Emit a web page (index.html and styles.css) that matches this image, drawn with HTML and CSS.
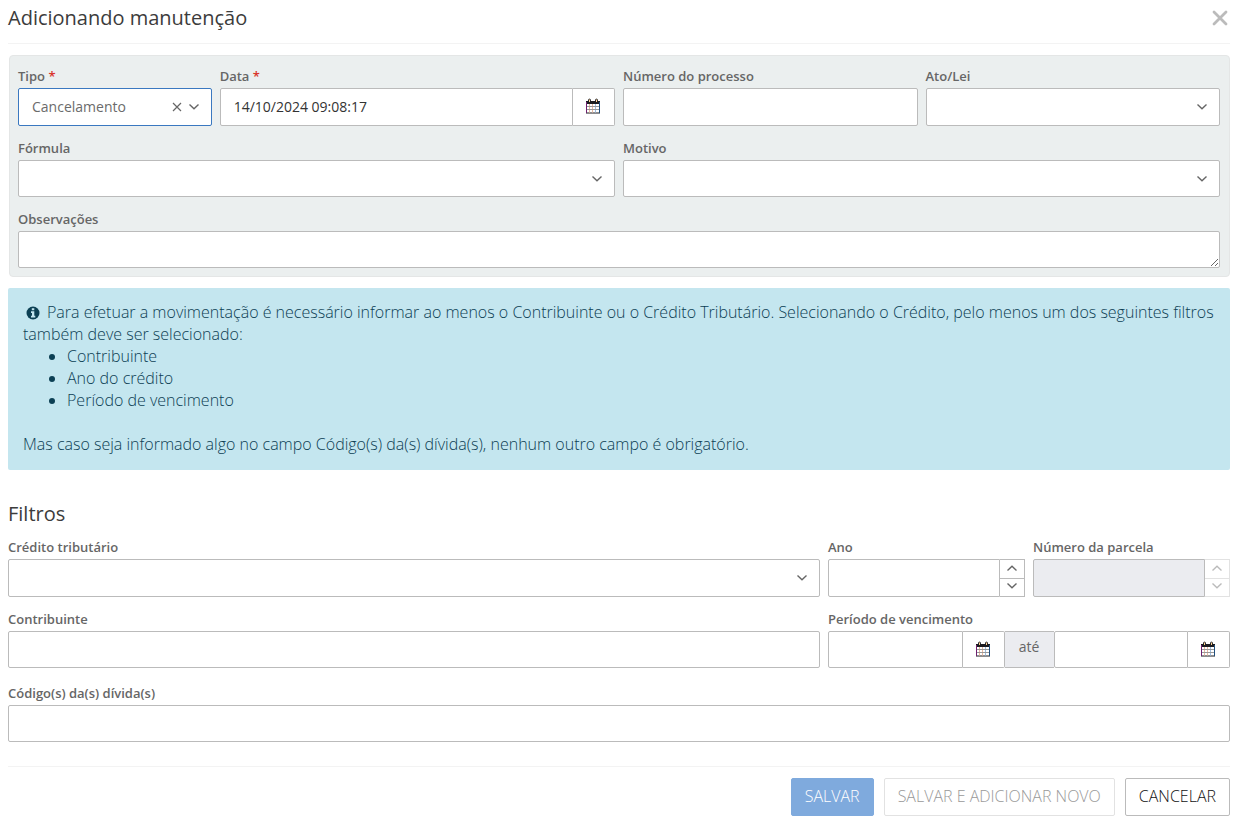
FILE: index.html
```html
<!DOCTYPE html>
<html lang="pt-BR">
<head>
<meta charset="utf-8">
<meta name="viewport" content="width=device-width, initial-scale=1">
<title>Adicionando manutenção</title>
<link rel="stylesheet" href="styles.css">
</head>
<body>
<svg class="sprite" aria-hidden="true">
  <symbol id="chevron" viewBox="0 0 12 8"><path d="M1.500 1.500 6 5.700l4.500-4.200" fill="none" stroke="currentColor" stroke-width="1.400"/></symbol>
  <symbol id="calendar" viewBox="0 0 16 16">
    <path d="M1 3h2q0-2.500 1.500-2.500T6 3h4q0-2.500 1.500-2.500T13 3h2v12.500H1z" fill="#1c1c20"/>
    <path d="M2 6h12v8.500H2z" fill="#fff"/>
    <path d="M4.500 6v8.500M7.500 6v8.500" stroke="#e8b8a0"/><path d="M10.500 6v8.500" stroke="#9cbce0"/>
    <path d="M2 8.500h12M2 11.500h12" stroke="#999"/>
    <path d="M1.500 4v11" stroke="#702070"/><path d="M14.500 4v11" stroke="#205080"/>
    <path d="M4.500 1.500v2.500M11.500 1.500v2.500" stroke="#ffd090"/>
  </symbol>
</svg>
<form class="dialog">
  <header class="header">
    <h1 class="title">Adicionando manutenção</h1>
    <button class="close" type="button" aria-label="Fechar"><svg viewBox="0 0 16 16"><path d="m2 2 12 12M14 2 2 14" fill="none" stroke="currentColor" stroke-width="2.800" stroke-linecap="round"/></svg></button>
  </header>

  <section class="panel grid">
    <div class="field span-2">
      <label class="label" for="tipo">Tipo <span class="required">*</span></label>
      <div class="select-wrap">
        <select class="control select tall active" id="tipo"><option>Cancelamento</option></select>
        <button class="clear" type="button" aria-label="Limpar"><svg viewBox="0 0 10 10"><path d="m1 1 8 8M9 1 1 9" fill="none" stroke="currentColor" stroke-width="1.200"/></svg></button>
        <svg class="chevron"><use href="#chevron"/></svg>
      </div>
    </div>
    <div class="field span-4">
      <label class="label" for="data">Data <span class="required">*</span></label>
      <div class="group">
        <input class="control tall" id="data" type="text" value="14/10/2024 09:08:17">
        <button class="date-button" type="button" aria-label="Abrir calendário"><svg class="calendar"><use href="#calendar"/></svg></button>
      </div>
    </div>
    <div class="field span-3">
      <label class="label" for="processo">Número do processo</label>
      <input class="control tall" id="processo" type="text">
    </div>
    <div class="field span-3">
      <label class="label" for="ato">Ato/Lei</label>
      <div class="select-wrap"><select class="control select tall" id="ato"><option></option></select><svg class="chevron"><use href="#chevron"/></svg></div>
    </div>
    <div class="field span-6">
      <label class="label" for="formula">Fórmula</label>
      <div class="select-wrap"><select class="control select" id="formula"><option></option></select><svg class="chevron"><use href="#chevron"/></svg></div>
    </div>
    <div class="field span-6">
      <label class="label" for="motivo">Motivo</label>
      <div class="select-wrap"><select class="control select" id="motivo"><option></option></select><svg class="chevron"><use href="#chevron"/></svg></div>
    </div>
    <div class="field span-12">
      <label class="label" for="obs">Observações</label>
      <textarea class="control" id="obs" rows="1"></textarea>
    </div>
  </section>

  <section class="notice">
    <p class="notice-text"><svg class="info" viewBox="0 0 14 14" aria-hidden="true"><circle cx="7" cy="7" r="6.500" fill="currentColor"/><path d="M5.800 2.200h2.500v2H5.800zM5 5.300h3.300v4.500h1v1.600H5V9.800h1V6.900H5z" fill="#c4e6ef"/></svg>Para efetuar a movimentação é necessário informar ao menos o Contribuinte ou o Crédito Tributário. Selecionando o Crédito, pelo menos um dos seguintes filtros também deve ser selecionado:</p>
    <ul class="notice-list"><li>Contribuinte</li><li>Ano do crédito</li><li>Período de vencimento</li></ul>
    <p class="notice-text">Mas caso seja informado algo no campo Código(s) da(s) dívida(s), nenhum outro campo é obrigatório.</p>
  </section>

  <h2 class="title subtitle">Filtros</h2>
  <section class="grid">
    <div class="field span-8">
      <label class="label" for="credito">Crédito tributário</label>
      <div class="select-wrap"><select class="control select tall" id="credito"><option></option></select><svg class="chevron"><use href="#chevron"/></svg></div>
    </div>
    <div class="field span-2">
      <label class="label" for="ano">Ano</label>
      <div class="group">
        <input class="control tall" id="ano" type="text">
        <div class="stepper">
          <button class="step" type="button" aria-label="Aumentar ano"><svg class="mini up"><use href="#chevron"/></svg></button>
          <button class="step" type="button" aria-label="Diminuir ano"><svg class="mini"><use href="#chevron"/></svg></button>
        </div>
      </div>
    </div>
    <div class="field span-2">
      <label class="label" for="parcela">Número da parcela</label>
      <div class="group">
        <input class="control tall" id="parcela" type="text" disabled>
        <div class="stepper">
          <button class="step" type="button" aria-label="Aumentar parcela" disabled><svg class="mini up"><use href="#chevron"/></svg></button>
          <button class="step" type="button" aria-label="Diminuir parcela" disabled><svg class="mini"><use href="#chevron"/></svg></button>
        </div>
      </div>
    </div>
    <div class="field span-8">
      <label class="label" for="contribuinte">Contribuinte</label>
      <input class="control" id="contribuinte" type="text">
    </div>
    <div class="field span-4">
      <label class="label" for="inicio">Período de vencimento</label>
      <div class="group">
        <input class="control" id="inicio" type="text">
        <button class="date-button" type="button" aria-label="Data inicial"><svg class="calendar"><use href="#calendar"/></svg></button>
        <label class="addon" for="fim">até</label>
        <input class="control" id="fim" type="text">
        <button class="date-button" type="button" aria-label="Data final"><svg class="calendar"><use href="#calendar"/></svg></button>
      </div>
    </div>
  </section>
  <div class="field codes">
    <label class="label" for="codigos">Código(s) da(s) dívida(s)</label>
    <input class="control" id="codigos" type="text">
  </div>

  <footer class="footer">
    <button class="button primary" type="submit" disabled>SALVAR</button>
    <button class="button" type="button" disabled>SALVAR E ADICIONAR NOVO</button>
    <button class="button" type="button">CANCELAR</button>
  </footer>
</form>
</body>
</html>
```
FILE: styles.css
```css
* { box-sizing: border-box; }
body {
  margin: 0;
  background: #fff;
  color: #333;
  font: 14px/22px "Open Sans", "Noto Sans", sans-serif;
}
button, input, select, textarea { font: inherit; color: inherit; }
button { padding: 0; cursor: pointer; }
svg { display: block; }
.sprite { display: none; }
.dialog { padding: 0 9px 7px 8px; }

.header {
  display: flex;
  align-items: center;
  justify-content: space-between;
  height: 44px;
  padding-bottom: 8px;
  border-bottom: 1px solid #f3f3f3;
}
.title { margin: 0; color: #3c3c3c; font-size: 20px; line-height: 26px; font-weight: 400; }
.close { width: 20px; border: 0; background: none; color: #bbb; }
.close svg { width: 16px; height: 16px; margin: 0 auto; }

.grid {
  display: grid;
  grid-template-columns: repeat(12, minmax(0, 1fr));
  gap: 12px 8px;
}
.span-2 { grid-column: span 2; }
.span-3 { grid-column: span 3; }
.span-4 { grid-column: span 4; }
.span-6 { grid-column: span 6; }
.span-8 { grid-column: span 8; }
.span-12 { grid-column: span 12; }
.panel {
  margin: 11px 0 0 1px;
  padding: 10px 9px 8px 8px;
  border: 1px solid #e4e6e6;
  border-radius: 4px;
  background: #ebefef;
}

.label {
  display: block;
  height: 22px;
  color: #666;
  font-size: 13px;
  line-height: 20px;
  font-weight: 600;
}
.required { color: #d9342b; }
.control {
  display: block;
  width: 100%;
  min-width: 0;
  height: 37px;
  margin: 0;
  padding: 0 13px 1px;
  border: 1px solid #bbb;
  border-radius: 2px;
  outline: 0;
  background: #fff;
}
.tall { height: 38px; }
.select { appearance: none; color: #6b6b6b; }
.active { border-color: #3a78c0; }
.control:disabled { background: #ebecf0; }
textarea.control { padding: 6px 13px; resize: vertical; }

.select-wrap { position: relative; }
.chevron {
  position: absolute;
  top: 15px;
  right: 12px;
  width: 12px;
  height: 8px;
  color: #666;
  pointer-events: none;
}
.clear {
  position: absolute;
  top: 14px;
  right: 30px;
  border: 0;
  background: none;
  color: #666;
}
.clear svg { width: 10px; height: 10px; }

.group { display: flex; }
.group .control { flex: 1; border-radius: 2px 0 0 2px; }
.date-button {
  display: grid;
  place-items: center;
  flex: 0 0 42px;
  padding: 0 1px 2px 0;
  border: 1px solid #bbb;
  border-left: 0;
  border-radius: 0 2px 2px 0;
  background: #fff;
}
.calendar { width: 16px; height: 16px; }
.addon {
  flex: 0 0 49px;
  padding-top: 4px;
  border: solid #bbb;
  border-width: 1px 0;
  background: #ebecf0;
  color: #666;
  text-align: center;
}
.stepper { display: flex; flex-direction: column; width: 25px; }
.step {
  display: grid;
  place-items: center;
  flex: 1;
  padding-bottom: 2px;
  border: 1px solid #bbb;
  border-left: 0;
  background: #fff;
  color: #666;
}
.step + .step { border-top: 0; }
.step:disabled { border-color: #e2e2e2; color: #bbb; }
.mini { width: 12px; height: 8px; }
.up { transform: rotate(180deg); }

.notice {
  margin-top: 11px;
  padding: 13px 15px 15px;
  border-radius: 2px;
  background: #c4e6ef;
  color: #0c4054;
  font-size: 16px;
  font-weight: 300;
}
.notice-text { margin: 0; }
.notice-list { margin: 0 0 22px; padding-left: 44px; }
.info { display: inline-block; width: 14px; height: 14px; margin: 0 7px 0 3px; vertical-align: -2px; }

.subtitle { margin: 31px 0 10px; }
.codes { margin-top: 15px; }

.footer {
  display: flex;
  justify-content: flex-end;
  gap: 10px;
  margin-top: 24px;
  padding-top: 11px;
  border-top: 1px solid #f3f3f3;
}
.button {
  height: 38px;
  padding: 0 13px 2px;
  border: 1px solid #bbb;
  border-radius: 2px;
  background: #fff;
  color: #111;
  font-size: 16px;
  font-weight: 300;
}
.button:disabled { border-color: #e2e2e2; color: #999; }
.button.primary:disabled { border-color: #7faadd; background: #7faadd; color: #fff; }
```
